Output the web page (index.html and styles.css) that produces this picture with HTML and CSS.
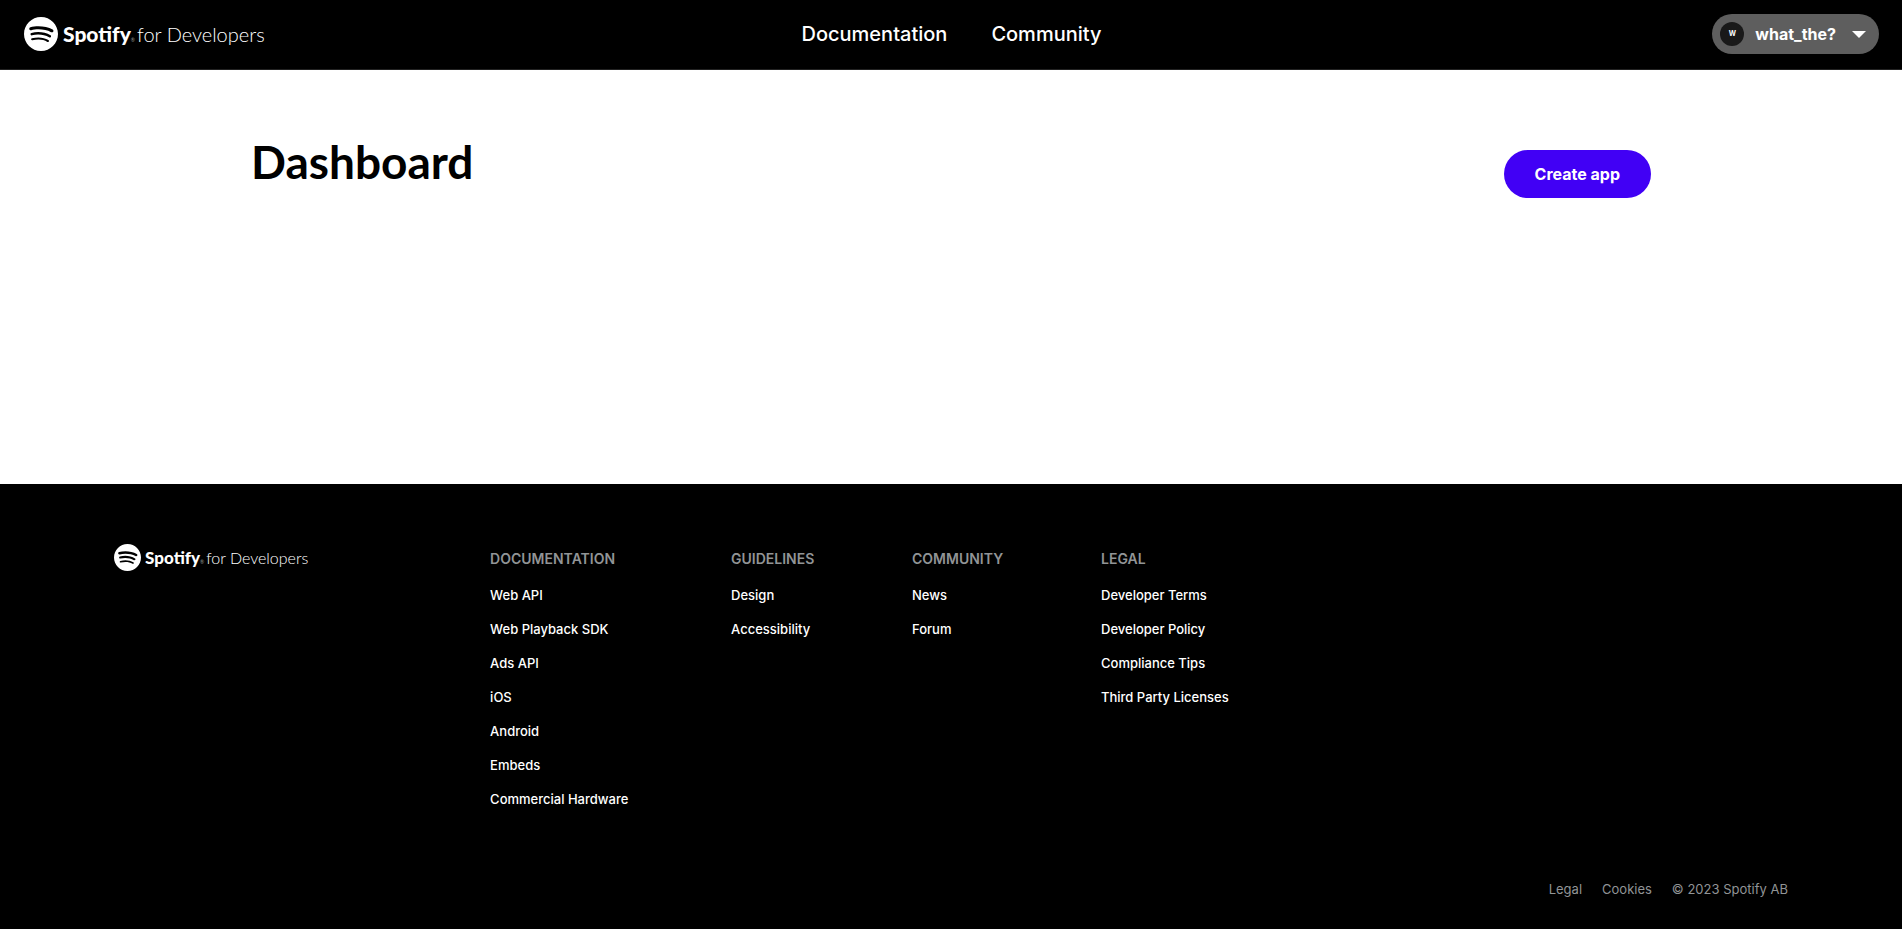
FILE: index.html
```html
<!DOCTYPE html>
<html lang="en">
<head>
<meta charset="utf-8">
<title>Dashboard | Spotify for Developers</title>
<meta name="viewport" content="width=device-width, initial-scale=1">
<link rel="stylesheet" href="styles.css">
</head>
<body>
<svg class="sprite" aria-hidden="true">
  <symbol id="spotify-mark" viewBox="0 0 24 24">
    <path d="M12 0C5.4 0 0 5.4 0 12s5.4 12 12 12 12-5.4 12-12S18.66 0 12 0zm5.521 17.34c-.24.359-.66.48-1.021.24-2.82-1.74-6.36-2.101-10.561-1.141-.418.122-.779-.179-.899-.539-.12-.421.18-.78.54-.9 4.56-1.021 8.52-.6 11.64 1.32.42.18.479.659.301 1.02zm1.44-3.3c-.301.42-.841.6-1.262.3-3.239-1.98-8.159-2.58-11.939-1.38-.479.12-1.02-.12-1.14-.6-.12-.48.12-1.021.6-1.141C9.6 9.9 15 10.561 18.72 12.84c.361.181.54.78.241 1.2zm.12-3.36C15.24 8.4 8.82 8.16 5.16 9.301c-.6.179-1.2-.181-1.38-.721-.18-.601.18-1.2.72-1.381 4.26-1.26 11.28-1.02 15.721 1.621.539.3.719 1.02.419 1.56-.299.421-1.02.599-1.559.3z"/>
  </symbol>
</svg>

<header class="topbar">
  <a class="logo" href="#">
    <svg class="logo-mark" aria-hidden="true"><use href="#spotify-mark"/></svg>
    <span class="logo-text">
      <span class="logo-brand">Spotify</span>
      <span class="logo-reg">®</span>
      <span class="logo-suffix">for Developers</span>
    </span>
  </a>
  <nav class="topnav" aria-label="Main">
    <a href="#">Documentation</a>
    <a href="#">Community</a>
  </nav>
  <button class="account" type="button">
    <span class="avatar">W</span>
    <span class="account-name">what_the?</span>
    <svg class="caret" viewBox="0 0 14 7" aria-hidden="true"><path d="M0 0h14L7 7z"/></svg>
  </button>
</header>

<main class="dashboard">
  <h1>Dashboard</h1>
  <button class="create" type="button">Create app</button>
</main>

<footer class="footer">
  <div class="footer-main">
    <a class="logo logo-small" href="#">
      <svg class="logo-mark" aria-hidden="true"><use href="#spotify-mark"/></svg>
      <span class="logo-text">
        <span class="logo-brand">Spotify</span>
        <span class="logo-reg">®</span>
        <span class="logo-suffix">for Developers</span>
      </span>
    </a>
    <nav class="footer-nav" aria-label="Footer">
      <section>
        <h2>Documentation</h2>
        <ul>
          <li><a href="#">Web API</a></li>
          <li><a href="#">Web Playback SDK</a></li>
          <li><a href="#">Ads API</a></li>
          <li><a href="#">iOS</a></li>
          <li><a href="#">Android</a></li>
          <li><a href="#">Embeds</a></li>
          <li><a href="#">Commercial Hardware</a></li>
        </ul>
      </section>
      <section>
        <h2>Guidelines</h2>
        <ul>
          <li><a href="#">Design</a></li>
          <li><a href="#">Accessibility</a></li>
        </ul>
      </section>
      <section>
        <h2>Community</h2>
        <ul>
          <li><a href="#">News</a></li>
          <li><a href="#">Forum</a></li>
        </ul>
      </section>
      <section>
        <h2>Legal</h2>
        <ul>
          <li><a href="#">Developer Terms</a></li>
          <li><a href="#">Developer Policy</a></li>
          <li><a href="#">Compliance Tips</a></li>
          <li><a href="#">Third Party Licenses</a></li>
        </ul>
      </section>
    </nav>
  </div>
  <div class="footer-legal">
    <a href="#">Legal</a>
    <a href="#">Cookies</a>
    <span>© 2023 Spotify AB</span>
  </div>
</footer>
</body>
</html>
```
FILE: styles.css
```css
* { box-sizing: border-box; }

body {
  margin: 0;
  min-height: 100vh;
  display: flex;
  flex-direction: column;
  background: #fff;
  color: #000;
  font-family: Inter, "Liberation Sans", sans-serif;
}

a { color: inherit; text-decoration: none; }
button { border: 0; font: inherit; cursor: pointer; }
.sprite { display: none; }

.topbar {
  display: grid;
  grid-template-columns: 1fr auto 1fr;
  align-items: center;
  height: 70px;
  padding: 0 23px 1px 24px;
  background: #000;
  border-bottom: 1px solid #222;
  color: #fff;
}

.logo {
  display: flex;
  align-items: center;
  gap: 5px;
  font-family: Lato, sans-serif;
  font-size: 20px;
  line-height: 34px;
  white-space: nowrap;
}
.logo-mark { width: 34px; height: 34px; fill: #fff; flex: none; }
.logo-text { display: flex; align-items: baseline; }
.logo-brand { font-size: 21px; font-weight: 900; }
.logo-reg { margin-right: 2px; color: #999; font-size: 5px; line-height: 5px; }
.logo-suffix { font-weight: 300; }

.topnav { display: flex; gap: 44px; font-size: 20px; line-height: 32px; font-weight: 500; }

.account {
  justify-self: end;
  display: flex;
  align-items: center;
  height: 40px;
  padding: 0 13px 0 8px;
  border-radius: 20px;
  background: #5e5e5e;
  color: #fff;
}
.avatar {
  width: 24px;
  height: 24px;
  border-radius: 50%;
  background: #191919;
  font-size: 7px;
  line-height: 23px;
  font-weight: 700;
  text-align: center;
}
.account-name { margin: 0 16px 0 11px; font-size: 16px; font-weight: 700; }
.caret { width: 14px; height: 7px; fill: #fff; }

.dashboard {
  flex: 1;
  display: flex;
  justify-content: space-between;
  align-items: flex-start;
  width: 100%;
  max-width: 1400px;
  min-height: 414px;
  margin: 0 auto;
  padding-top: 64px;
}
h1 { margin: 0; font-family: Lato, sans-serif; font-size: 46px; line-height: 56px; font-weight: 700; }
.create {
  margin-top: 16px;
  padding: 0 31px;
  border-radius: 24px;
  background: #4100f5;
  color: #fff;
  font-size: 16px;
  line-height: 48px;
  font-weight: 700;
}

.footer { padding: 60px 6% 29px; background: #000; color: #fff; }
.footer-main { display: flex; }
.footer-main .logo { flex: none; align-self: flex-start; width: 376px; }
.logo-small { gap: 4px; font-size: 16px; line-height: 27px; }
.logo-small .logo-brand { font-size: 17px; }
.logo-small .logo-mark { width: 27px; height: 27px; }
.footer-nav {
  flex: 1;
  display: grid;
  grid-template-columns: 241fr 181fr 189fr 687fr;
  padding-top: 4px;
  font-size: 13px;
  line-height: 22px;
}
.footer-nav h2 { margin: 0 0 14px; color: #919496; font-size: 14px; line-height: 22px; font-weight: 600; text-transform: uppercase; }
.footer-nav ul { display: grid; gap: 12px; margin: 0; padding: 0; list-style: none; font-weight: 500; }
.footer-legal { display: flex; justify-content: flex-end; gap: 20px; margin-top: 68px; color: #919496; font-size: 13px; line-height: 22px; }
```
